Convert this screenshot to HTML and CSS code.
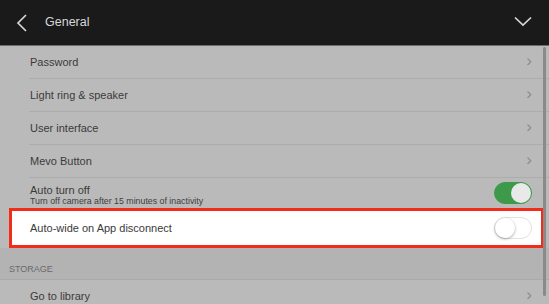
FILE: index.html
```html
<!DOCTYPE html>
<html>
  <head>
    <meta charset="UTF-8">
    <title>General</title>
    <link rel="stylesheet" href="styles.css">
  </head>
  <body>
    <div class="screen">
      <div class="topbar">
        <svg class="back" width="12" height="20" viewBox="0 0 12 20"><path d="M10 2 L2 10 L10 18" fill="none" stroke="#d6d6d6" stroke-width="1.7"/></svg>
        <span class="title">General</span>
        <svg class="collapse" width="18" height="11" viewBox="0 0 18 11"><path d="M1 1.5 L9 9 L17 1.5" fill="none" stroke="#d6d6d6" stroke-width="1.7"/></svg>
      </div>
      <div class="list">
        <div class="row"><div class="cell"><span class="label">Password</span><span class="chev">&rsaquo;</span></div></div>
        <div class="row"><div class="cell"><span class="label">Light ring &amp; speaker</span><span class="chev">&rsaquo;</span></div></div>
        <div class="row"><div class="cell"><span class="label">User interface</span><span class="chev">&rsaquo;</span></div></div>
        <div class="row"><div class="cell"><span class="label">Mevo Button</span><span class="chev">&rsaquo;</span></div></div>
        <div class="row tall">
          <div class="cell">
            <div class="texts">
              <span class="label">Auto turn off</span>
              <span class="sub">Turn off camera after 15 minutes of inactivity</span>
            </div>
            <span class="switch on"><span class="knob"></span></span>
          </div>
        </div>
        <div class="row highlight">
          <div class="cell">
            <span class="label">Auto-wide on App disconnect</span>
            <span class="switch"><span class="knob"></span></span>
          </div>
        </div>
        <div class="section">STORAGE</div>
        <div class="row last"><div class="cell"><span class="label">Go to library</span><span class="chev">&rsaquo;</span></div></div>
      </div>
      <div class="scrollbar"></div>
    </div>
  </body>
</html>
```
FILE: styles.css
```css
body {
  margin: 0;
  font-family: "Liberation Sans", Arial, sans-serif;
  background: #bababa;
}

.screen {
  position: relative;
  width: 549px;
  height: 304px;
  overflow: hidden;
  background: #bababa;
}

.topbar {
  height: 46px;
  box-sizing: border-box;
  background: #1a1a1a;
  border-bottom: 1px solid #6b6b6b;
  display: flex;
  align-items: center;
  padding: 0 17px 0 16px;
}
.back {
  margin-right: 17px;
}
.title {
  flex-grow: 1;
  color: #d8d8d8;
  font-size: 12.5px;
  margin-bottom: 2px;
}
.collapse {
  margin-bottom: 3px;
}

.row {
  padding-left: 29px;
}
.cell {
  height: 32px;
  border-bottom: 1px solid #acacac;
  display: flex;
  align-items: center;
  padding-left: 1px;
  padding-right: 17px;
}
.label {
  flex-grow: 1;
  font-size: 11px;
  color: #3a3a3a;
}
.chev {
  color: #8c8c8c;
  font-size: 17px;
  line-height: 1;
  margin-bottom: 3px;
}

.row.tall .cell {
  height: 30px;
  border-bottom: none;
}
.texts {
  flex-grow: 1;
  display: flex;
  flex-direction: column;
  padding-top: 3px;
}
.sub {
  font-size: 8.8px;
  color: #3e3e3e;
  margin-top: 0;
}

.switch {
  width: 38px;
  height: 22px;
  box-sizing: border-box;
  border-radius: 11px;
  border: 1px solid #e2e2e2;
  background: #fff;
  display: flex;
  align-items: center;
}
.switch .knob {
  width: 20px;
  height: 20px;
  border-radius: 50%;
  background: #fff;
  box-shadow: 0 1px 3px rgba(0, 0, 0, 0.35);
}
.switch.on {
  background: #3d9a4b;
  border-color: #3d9a4b;
  justify-content: flex-end;
}
.switch.on .knob {
  background: #e9e9e9;
  box-shadow: none;
}

.row.highlight {
  margin: 0 5px 0 9px;
  padding-left: 0;
  background: #fff;
  border: 3px solid #f12d1a;
}
.row.highlight .cell {
  height: 34px;
  border-bottom: none;
  padding-left: 18px;
  padding-right: 9px;
}

.section {
  height: 32px;
  box-sizing: border-box;
  background: #b3b3b3;
  border-bottom: 1px solid #a9a9a9;
  padding: 16px 0 0 9px;
  font-size: 9px;
  color: #6a6a6a;
}

.scrollbar {
  position: absolute;
  right: 3px;
  top: 47px;
  width: 3px;
  height: 249px;
  border-radius: 2px;
  background: #8a8a8a;
}
```
